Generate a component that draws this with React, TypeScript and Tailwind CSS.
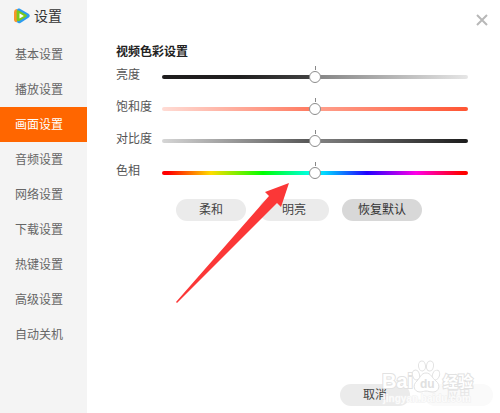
import { useState } from "react";

const navItems = [
  "基本设置",
  "播放设置",
  "画面设置",
  "音频设置",
  "网络设置",
  "下载设置",
  "热键设置",
  "高级设置",
  "自动关机",
];

const sliders = [
  {
    id: "brightness",
    label: "亮度",
    track: "bg-[linear-gradient(to_right,#1e1c1d,#201f1f_25%,#424242_49%,#858585_51%,#e6e6e6)]",
  },
  {
    id: "saturation",
    label: "饱和度",
    track: "bg-[linear-gradient(to_right,#ffdcd5,#ff7a60_49%,#ff9f8c_51%,#ff5533)]",
  },
  {
    id: "contrast",
    label: "对比度",
    track: "bg-[linear-gradient(to_right,#d6d6d6,#555555_49%,#808080_51%,#1c1c1c)]",
  },
  {
    id: "hue",
    label: "色相",
    track:
      "bg-[linear-gradient(to_right,#ff0000,#ff0000_2%,#ffdd00_16%,#00ff00_33%,#00ffe1_48%,#00d9ff_53%,#2200ff_67%,#ff00e6_83%,#ff0000_98%)]",
  },
];

function Logo() {
  return (
    <svg className="h-4 w-4" viewBox="0 0 16 16" aria-hidden="true">
      <path d="M2.500 1Q0 1.500 0 4v7.500Q0 14 2.800 14.300L5 13V2Z" fill="#f9952b" />
      <path d="M3 2.500Q3-.3 5.500.600L14.500 5.800Q17 7.800 14.500 9.800L6 15.200Q3 16 3 13Z" fill="#2c9cf0" />
      <path d="M2.600 3.500Q2.800 1.800 4.500 2.400L12.300 6.800Q13.500 7.800 12.300 8.800L4.800 13.200Q2.700 13.600 2.600 11.800Z" fill="#7ac91d" />
      <path d="M5.500 5.200v5.400L9.900 7.900Z" fill="#fff" />
    </svg>
  );
}

function SliderRow({ id, label, track }: { id: string; label: string; track: string }) {
  const [value, setValue] = useState(50);
  return (
    <div className="flex h-8 items-start">
      <label htmlFor={id} className="w-[46px] shrink-0 leading-[18px] text-[#555]">
        {label}
      </label>
      <div className="relative flex h-[22px] flex-1 items-center">
        <span className="absolute left-1/2 top-0 h-1 w-px bg-[#888]" />
        <input
          id={id}
          type="range"
          value={value}
          onChange={(e) => setValue(Number(e.target.value))}
          className={`h-1 w-full appearance-none rounded-full outline-none [&::-webkit-slider-thumb]:size-3 [&::-webkit-slider-thumb]:appearance-none [&::-webkit-slider-thumb]:rounded-full [&::-webkit-slider-thumb]:border [&::-webkit-slider-thumb]:border-[#8c8c8c] [&::-webkit-slider-thumb]:bg-white ${track}`}
        />
      </div>
    </div>
  );
}

function Watermark() {
  return (
    <svg
      className="pointer-events-none absolute bottom-1 right-6 h-[54px] w-[94px]"
      viewBox="0 0 94 54"
      aria-hidden="true"
      fill="#fff"
      stroke="#e2e2e2"
      strokeWidth="1"
    >
      <g fontFamily="'Liberation Sans', 'Noto Sans CJK SC', sans-serif" fontWeight="700" paintOrder="stroke" strokeWidth="2">
        <text x="0" y="33" fontSize="20">Bai</text>
        <text x="61" y="32" fontSize="15">经验</text>
        <text x="1" y="47" fontSize="10" stroke="#efefef" strokeWidth="1" fillOpacity="0.8">jingyan.baidu.com</text>
      </g>
      <ellipse cx="34" cy="20" rx="3.500" ry="5" transform="rotate(-15 34 20)" />
      <ellipse cx="40" cy="11" rx="3.500" ry="5" transform="rotate(-5 40 11)" />
      <ellipse cx="48" cy="11" rx="3.500" ry="5" transform="rotate(8 48 11)" />
      <ellipse cx="54" cy="20" rx="3.500" ry="5" transform="rotate(20 54 20)" />
      <path d="M44 18c-5 0-6 5-9 8-5 4-3 11 3 11 3 0 4-1 6-1s4 1 7 1c6 0 8-7 3-11-4-3-5-8-10-8Z" />
      <text x="38" y="33" fontFamily="'Liberation Sans', sans-serif" fontWeight="700" fontSize="12" fill="#e0e0e0" stroke="none">du</text>
    </svg>
  );
}

const pill = "flex h-[22px] items-center justify-center rounded-full";

export default function App() {
  const [active, setActive] = useState(2);
  return (
    <div className="relative flex min-h-screen bg-white font-['Liberation_Sans','Noto_Sans_CJK_SC',sans-serif] text-xs text-[#444]">
      <aside className="w-[87px] shrink-0 bg-[#f4f4f4]">
        <h1 className="flex h-[37px] items-center gap-1 pb-1.5 pl-3.5 text-sm text-[#333]">
          <Logo />
          设置
        </h1>
        <nav>
          {navItems.map((item, i) => (
            <button
              key={item}
              onClick={() => setActive(i)}
              className={`block h-[35px] w-full pl-[15px] text-left ${
                i === active ? "bg-[#ff6600] text-white" : "text-[#666]"
              }`}
            >
              {item}
            </button>
          ))}
        </nav>
      </aside>

      <main className="flex flex-1 flex-col">
        <header className="flex h-10 justify-end pr-3 pt-3.5">
          <button aria-label="关闭" className="size-3">
            <svg viewBox="0 0 12 12" className="size-3" stroke="#b8b8b8" strokeWidth="2">
              <path d="M1 1 11 11M11 1 1 11" />
            </svg>
          </button>
        </header>

        <section className="flex-1 pl-[29px] pr-8">
          <h2 className="h-[26px] pt-1 font-bold leading-4 text-[#222]">视频色彩设置</h2>
          {sliders.map((s) => (
            <SliderRow key={s.id} {...s} />
          ))}
          <div className="flex gap-[13px] pl-[60px] pt-[5px]">
            <button className={`${pill} w-[70px] bg-[#ebebeb]`}>柔和</button>
            <button className={`${pill} w-[70px] bg-[#ebebeb]`}>明亮</button>
            <button className={`${pill} w-20 bg-[#d8d8d8] text-[#333]`}>恢复默认</button>
          </div>
        </section>

        <footer className="flex justify-end gap-3.5 pb-[7px] pr-[7px]">
          <button className={`${pill} w-[70px] bg-[#ebebeb]`}>取消</button>
          <button disabled className={`${pill} w-[69px] bg-[#fafafa] text-[#e6e6e6]`}>
            应用
          </button>
        </footer>
      </main>

      <Watermark />
      <svg
        className="pointer-events-none absolute left-[176px] top-[183px] h-[120px] w-[114px]"
        viewBox="0 0 114 120"
        aria-hidden="true"
      >
        <path d="M113 0 89 9 93 13 0 119 1 120 101 20 105 24Z" fill="#fb3737" />
      </svg>
    </div>
  );
}
